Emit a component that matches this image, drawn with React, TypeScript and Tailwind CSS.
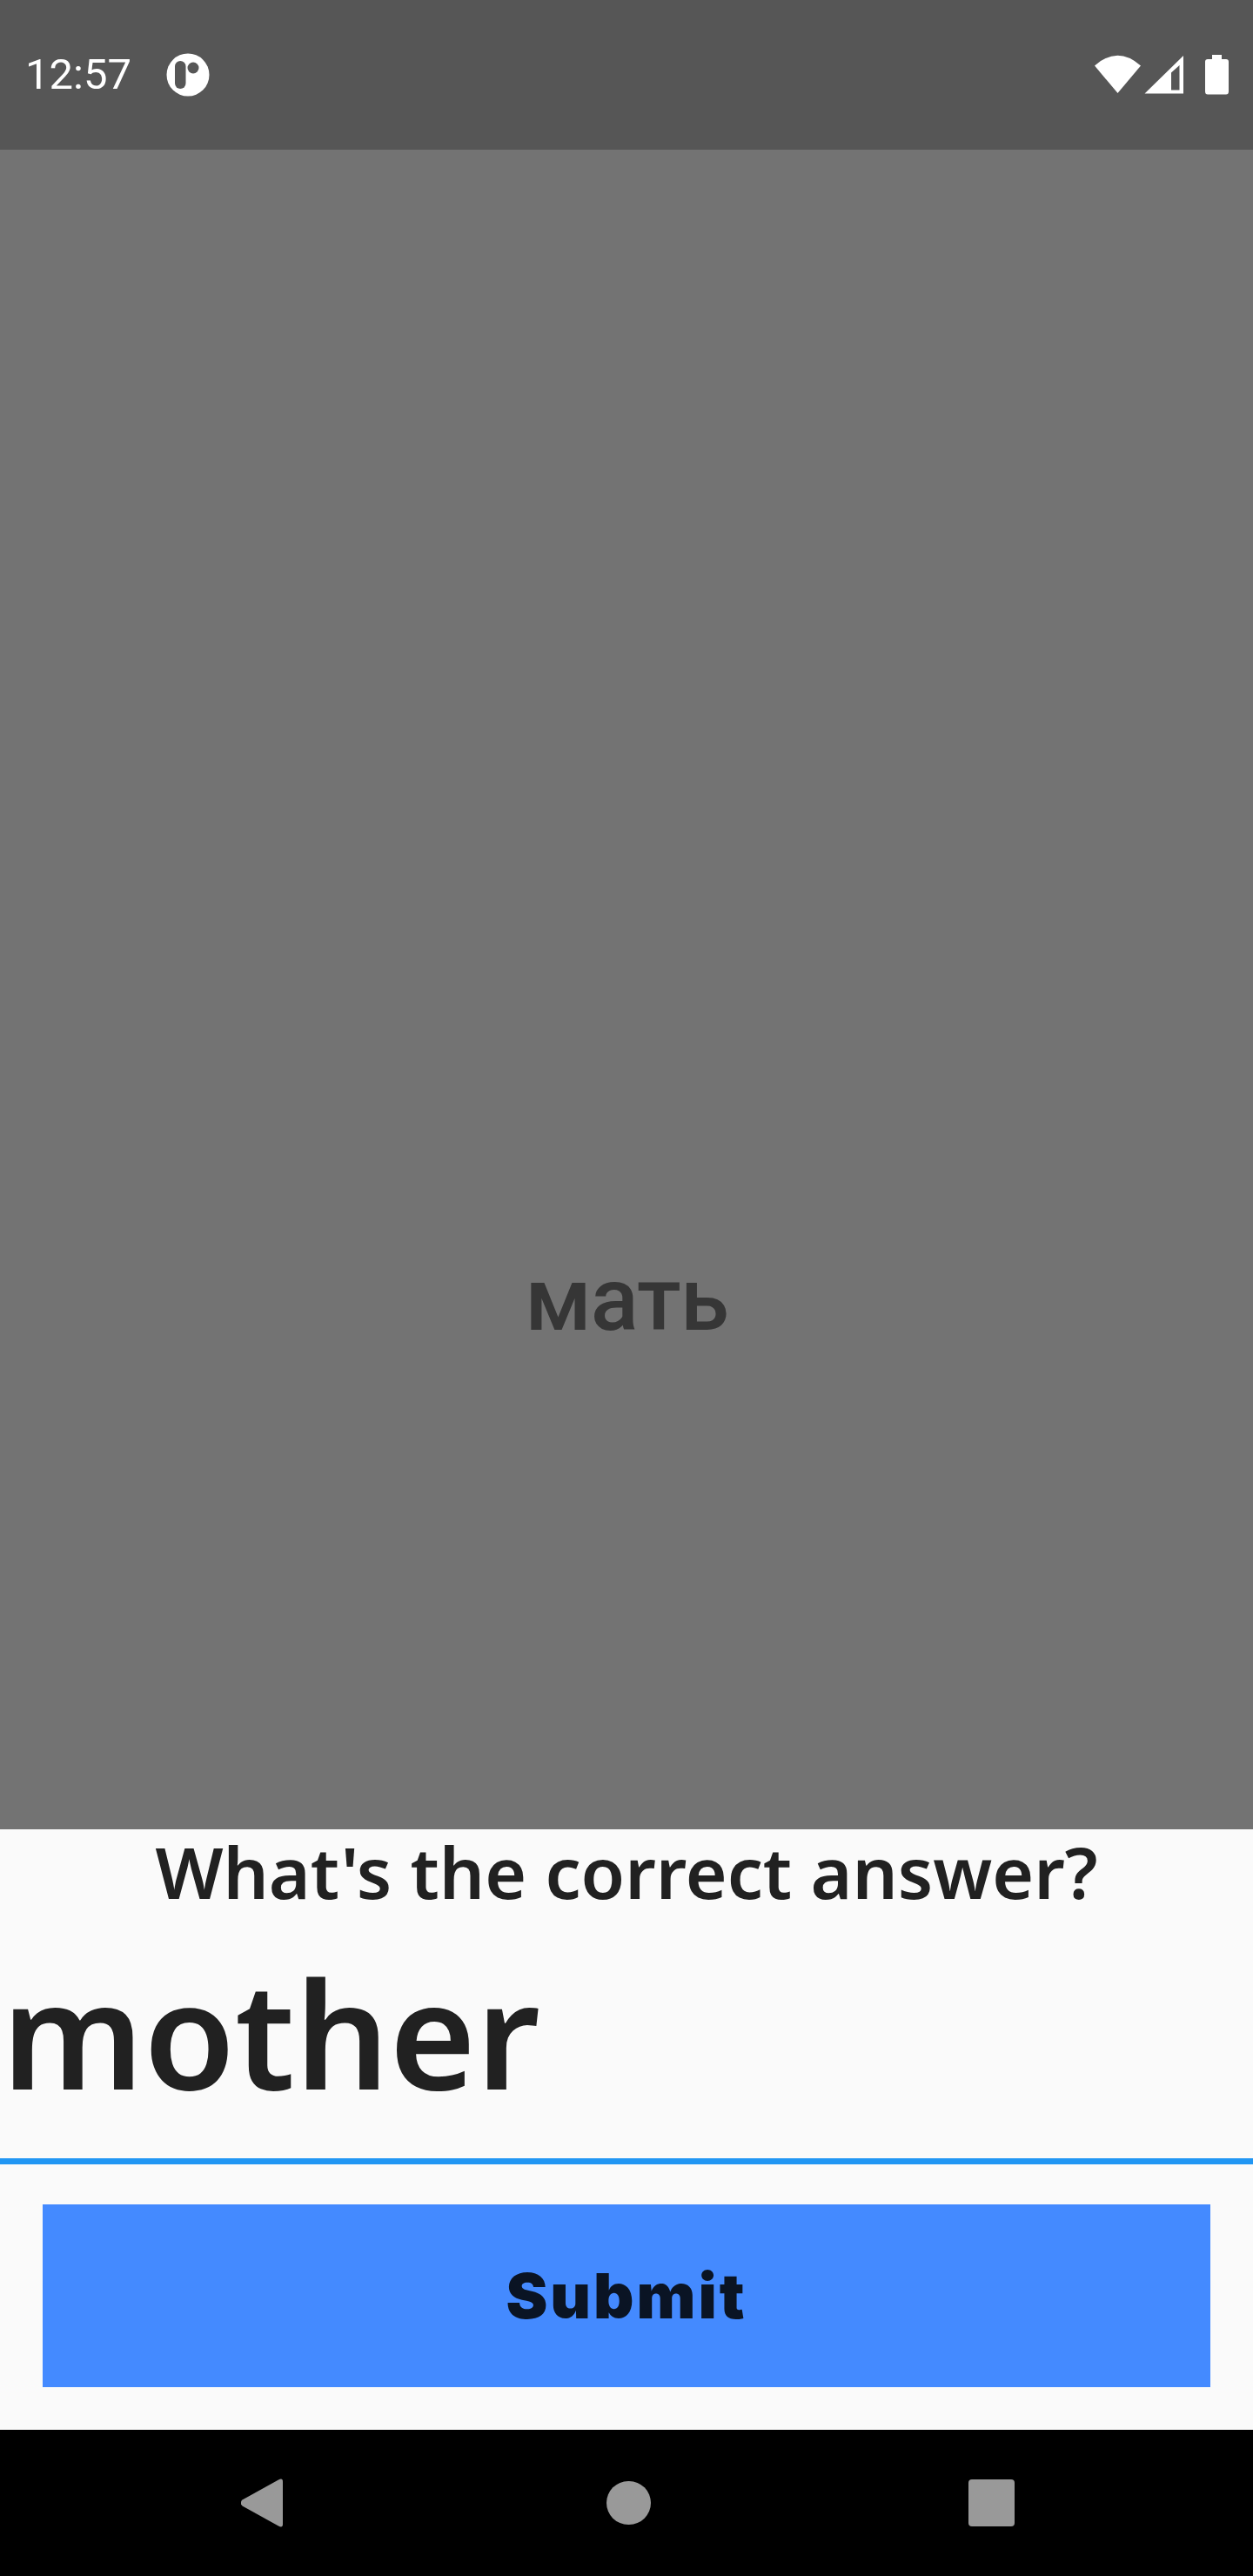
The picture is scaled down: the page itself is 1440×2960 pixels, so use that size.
const StatusBar = () => (
  <div className="flex h-[172px] items-center justify-between bg-[#565656] pl-[29px] pr-[28px]">
    <div className="flex items-center gap-[40px]">
      <span className="font-['Roboto',sans-serif] text-[49px] leading-[172px] text-white">12:57</span>
      <svg width="50" height="50" viewBox="0 0 50 50" aria-hidden="true">
        <circle cx="25" cy="25" r="24.5" fill="#fff" />
        <rect x="10" y="9" width="12.5" height="32" rx="6.25" fill="#565656" />
        <circle cx="31" cy="17" r="6.5" fill="#565656" />
      </svg>
    </div>
    <svg width="155" height="46" viewBox="1257 63 155 46" aria-hidden="true">
      <path d="M1258 75.5 Q1284.5 52 1311 75.5 L1284.5 107 Z" fill="#fff" />
      <path fillRule="evenodd" d="M1315.5 107.5 L1360 64 V107.5 Z M1346 83.5 V103.5 H1355.5 V75 Z" fill="#fff" />
      <path d="M1393 63 H1404 V68 H1409 Q1412 68 1412 71 V105 Q1412 108.5 1409 108.5 H1388 Q1385 108.5 1385 105 V71 Q1385 68 1388 68 H1393 Z" fill="#fff" />
    </svg>
  </div>
);

const NavBar = () => (
  <div className="flex h-[168px] items-center bg-black pl-[277px]">
    <svg width="48" height="56" viewBox="0 0 48 56" aria-hidden="true">
      <path d="M1.5 24.5 L43 1.5 Q48 -1 48 3.5 V52.5 Q48 57 43 54.5 L1.5 31.5 Q-2 28 1.5 24.5 Z" fill="#999" />
    </svg>
    <div className="ml-[372px] h-[50px] w-[51px] rounded-full bg-[#999]" />
    <div className="ml-[365px] h-[54px] w-[53px] rounded-[4px] bg-[#999]" />
  </div>
);

export default function App() {
  return (
    <div className="flex h-[2960px] w-[1440px] flex-col bg-[#fafafa]">
      <StatusBar />
      <div className="flex h-[1930px] items-end justify-center bg-[#737373] pb-[544px]">
        <span className="font-['Roboto',sans-serif] text-[102px] font-medium leading-[130px] tracking-[-1px] text-[#363636]">мать</span>
      </div>
      <div className="h-[385px]">
        <p className="text-center font-['Noto_Sans',sans-serif] text-[82px] font-semibold leading-[96px] text-[#212121]">What's the correct answer?</p>
        <div className="h-[289px] border-b-[7px] border-[#2196f3] pl-[2px]">
          <span className="font-['Noto_Sans',sans-serif] text-[170px] font-semibold leading-[274px] text-[#212121]">mother</span>
        </div>
      </div>
      <div className="px-[49px] pt-[46px] pb-[49px]">
        <button className="flex h-[210px] w-full items-center justify-center bg-[#448aff] font-['Inter',sans-serif] text-[72px] font-black tracking-[3px] text-[#0a1424]">
          Submit
        </button>
      </div>
      <NavBar />
    </div>
  );
}
